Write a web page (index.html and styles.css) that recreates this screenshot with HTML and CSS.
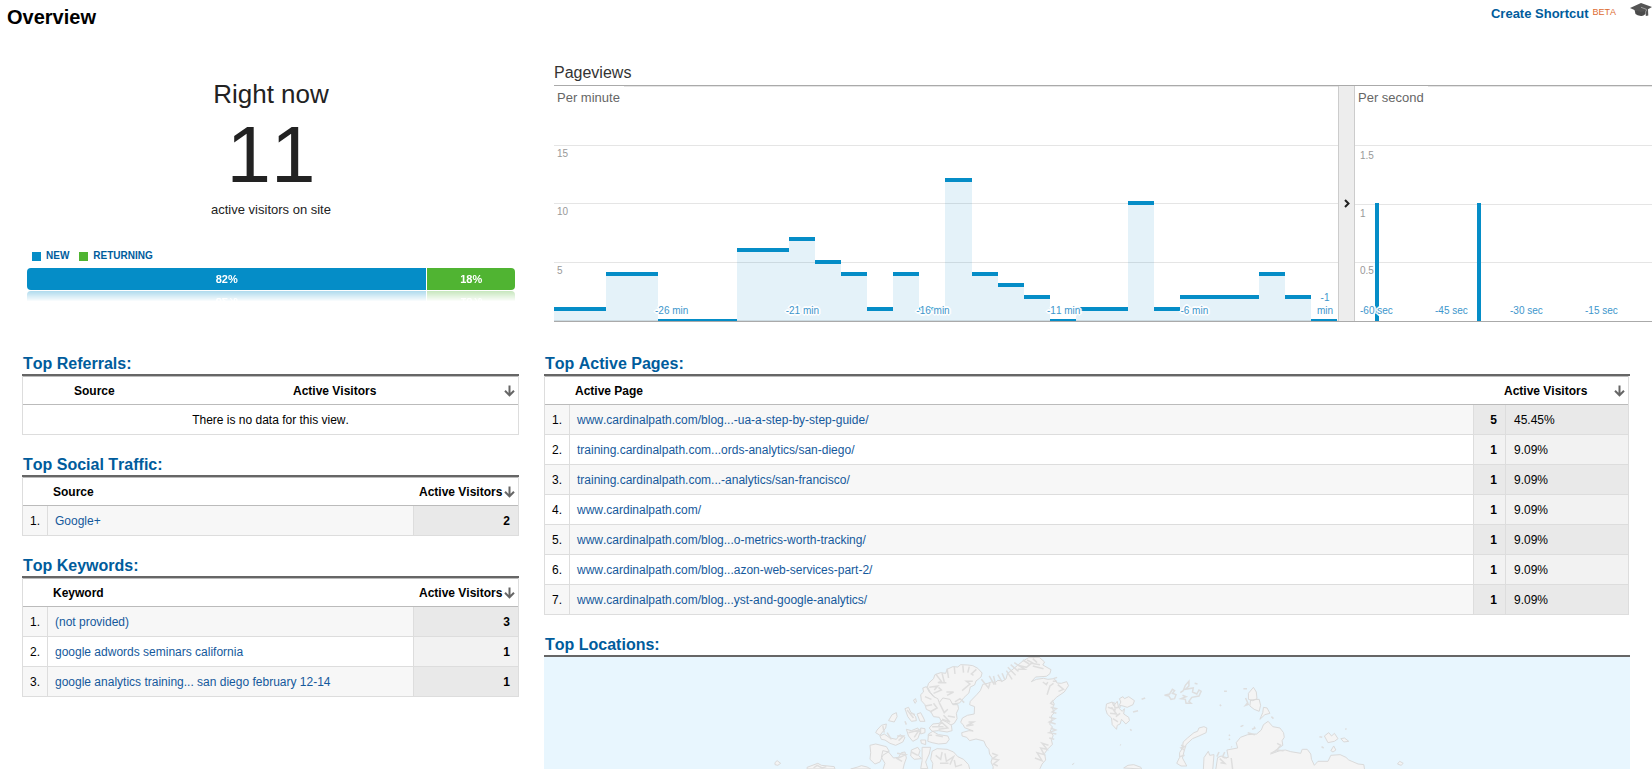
FILE: index.html
```html
<!DOCTYPE html>
<html lang="en">
<head>
<meta charset="utf-8">
<title>Overview</title>
<link rel="stylesheet" href="styles.css">
</head>
<body>
<svg class="defs" aria-hidden="true">
  <symbol id="arrow-down" viewBox="0 0 11 12"><path d="M5.5 0.5V10M1 5.8l4.5 4.5L10 5.8" fill="none" stroke="#666" stroke-width="2"/></symbol>
</svg>

<header class="topbar">
  <h1 class="title">Overview</h1>
  <nav class="tools">
    <a class="shortcut" href="#">Create Shortcut</a>
    <span class="beta">BETA</span>
    <button class="hat" type="button" aria-label="Education">
      <svg width="22" height="14" viewBox="0 0 22 14"><path d="M0 5L11 0l11 4-4 2.2.3 6.3-2.5.5-.3-5L11 10z" fill="#555"/><path d="M4.500 6.800L11 9l4.400-1.500v3.500Q13 13.500 11 13 7 12.500 5.500 11z" fill="#4a4a4a"/><path d="M11 4.300l5.300 2v2" fill="none" stroke="#bbb" stroke-width=".7"/></svg>
    </button>
  </nav>
</header>

<main class="grid">
  <section class="now">
    <h2 class="now-title">Right now</h2>
    <div class="count">11</div>
    <div class="caption">active visitors on site</div>
    <ul class="legend">
      <li><i class="swatch new"></i>NEW</li>
      <li><i class="swatch returning"></i>RETURNING</li>
    </ul>
    <div class="split">
      <div class="part new" style="flex-grow:82">82%</div>
      <div class="part returning" style="flex-grow:18">18%</div>
    </div>
  </section>

  <section class="views">
    <h2 class="views-title">Pageviews</h2>
    <div class="charts">
      <div class="plot minutes">
        <svg class="marks" viewBox="0 0 784 235" preserveAspectRatio="none" aria-hidden="true">
          <path class="gridline" d="M0 0h784v1H0zM0 59h784v1H0zM0 117h784v1H0zM0 176h784v1H0zM0 234h784v1H0z"/>
          <path class="area" d="M0 235V223H52V188H104V235ZM183 235V164H235V153H261V176H287V188H313V223H339V188H365V223H391V94H418V188H444V199H470V211H496V235ZM522 235V223H574V117H600V223H626V211H705V188H731V211H757V235Z"/>
          <path class="cap" d="M0 221h52v4H0zM52 186h52v4H52zM104 233h79v3H104zM183 162h52v4H183zM235 151h26v4H235zM261 174h26v4H261zM287 186h26v4H287zM313 221h26v4H313zM339 186h26v4H339zM365 221h26v4H365zM391 92h27v4H391zM418 186h26v4H418zM444 197h26v4H444zM470 209h26v4H470zM496 233h26v3H496zM522 221h52v4H522zM574 115h26v4H574zM600 221h26v4H600zM626 209h79v4H626zM705 186h26v4H705zM731 209h26v4H731zM757 233h26v3H757z"/>
        </svg>
        <div class="plot-title">Per minute</div>
        <div class="ylabels"><span>15</span><span>10</span><span>5</span></div>
        <div class="xlabels">
          <span>-26 min</span><span>-21 min</span><span>-16 min</span><span>-11 min</span><span>-6 min</span><span class="wrap">-1<br>min</span>
        </div>
      </div>
      <button class="divider" type="button" aria-label="Collapse per second chart">
        <svg width="6" height="9" viewBox="0 0 6 9"><path d="M1 1l3.500 3.500L1 8" fill="none" stroke="#222" stroke-width="2"/></svg>
      </button>
      <div class="plot seconds">
        <svg class="marks" viewBox="0 0 297 235" preserveAspectRatio="none" aria-hidden="true">
          <path class="gridline" d="M0 0h297v1H0zM0 59h297v1H0zM0 118h297v1H0zM0 176h297v1H0z"/>
          <path class="cap" d="M20 117h4v118h-4zM122 117h4v118h-4z"/>
        </svg>
        <div class="plot-title">Per second</div>
        <div class="ylabels"><span>1.5</span><span>1</span><span>0.5</span></div>
        <div class="xlabels">
          <span>-60 sec</span><span>-45 sec</span><span>-30 sec</span><span>-15 sec</span>
        </div>
      </div>
    </div>
  </section>

  <div class="column">
    <section>
      <h2 class="heading">Top Referrals:</h2>
      <table class="data referrals">
        <thead><tr><th class="h-source">Source</th><th><div class="sort">Active Visitors<svg class="arrow"><use href="#arrow-down"/></svg></div></th></tr></thead>
        <tbody><tr><td class="empty" colspan="2">There is no data for this view.</td></tr></tbody>
      </table>
    </section>
    <section>
      <h2 class="heading">Top Social Traffic:</h2>
      <table class="data small">
        <thead><tr><th class="num"></th><th>Source</th><th class="val"><div class="sort">Active Visitors<svg class="arrow"><use href="#arrow-down"/></svg></div></th></tr></thead>
        <tbody><tr><td class="num">1.</td><td><a href="#">Google+</a></td><td class="val">2</td></tr></tbody>
      </table>
    </section>
    <section>
      <h2 class="heading">Top Keywords:</h2>
      <table class="data small">
        <thead><tr><th class="num"></th><th>Keyword</th><th class="val"><div class="sort">Active Visitors<svg class="arrow"><use href="#arrow-down"/></svg></div></th></tr></thead>
        <tbody>
          <tr><td class="num">1.</td><td><a href="#">(not provided)</a></td><td class="val">3</td></tr>
          <tr><td class="num">2.</td><td><a href="#">google adwords seminars california</a></td><td class="val">1</td></tr>
          <tr><td class="num">3.</td><td><a href="#">google analytics training... san diego february 12-14</a></td><td class="val">1</td></tr>
        </tbody>
      </table>
    </section>
  </div>

  <div class="column">
    <section>
      <h2 class="heading">Top Active Pages:</h2>
      <table class="data pages">
        <colgroup><col class="c-num"><col><col class="c-count"><col class="c-pct"></colgroup>
        <thead><tr><th></th><th>Active Page</th><th class="h-visitors" colspan="2"><div class="sort">Active Visitors<svg class="arrow"><use href="#arrow-down"/></svg></div></th></tr></thead>
        <tbody>
          <tr><td class="num">1.</td><td><a href="#">www.cardinalpath.com/blog...-ua-a-step-by-step-guide/</a></td><td class="val">5</td><td class="pct">45.45%</td></tr>
          <tr><td class="num">2.</td><td><a href="#">training.cardinalpath.com...ords-analytics/san-diego/</a></td><td class="val">1</td><td class="pct">9.09%</td></tr>
          <tr><td class="num">3.</td><td><a href="#">training.cardinalpath.com...-analytics/san-francisco/</a></td><td class="val">1</td><td class="pct">9.09%</td></tr>
          <tr><td class="num">4.</td><td><a href="#">www.cardinalpath.com/</a></td><td class="val">1</td><td class="pct">9.09%</td></tr>
          <tr><td class="num">5.</td><td><a href="#">www.cardinalpath.com/blog...o-metrics-worth-tracking/</a></td><td class="val">1</td><td class="pct">9.09%</td></tr>
          <tr><td class="num">6.</td><td><a href="#">www.cardinalpath.com/blog...azon-web-services-part-2/</a></td><td class="val">1</td><td class="pct">9.09%</td></tr>
          <tr><td class="num">7.</td><td><a href="#">www.cardinalpath.com/blog...yst-and-google-analytics/</a></td><td class="val">1</td><td class="pct">9.09%</td></tr>
        </tbody>
      </table>
    </section>
    <section>
      <h2 class="heading">Top Locations:</h2>
      <svg class="map" viewBox="0 0 1086 112" role="img" aria-label="World map">
        <!-- Canada and Greenland -->
        <g transform="translate(-4 -27) scale(.3571 .3333)">
          <path class="land" d="M1350 95l18-12 30-1 15 14-5 9 23 14-3 12-10 8-30 2-12 14 14-7 20-3 12 3 18-2 8 13 12 1 15-5 5 12-12 19-22 16-10 12 4 8-5 12 5 14-8 10 2 14-7 10 8 9-6 12 8 14-5 12 3 14-12 13-10 14 3 20-10 12-6 14 0 8H1268l1-14-6-14 4-12-8-12-2-14-8-10-6-15-22-6-18 5-8-10-13-4-1-10 20-6 12 1-24-10-4-9-7-7 5-13 14-8 19-4 1-22-14-6 2-10 18-20 10-12 7-19 14-3 10-4 12 1 6-6 14 2 9-6 4-16z"/>
          <path class="land" d="M1088 160l14-14 4-12 16-6 14 2 4-12 16-8 14 1 8-7 20 1 14 2 14 8 12 14-3 12-14 12-4 12-12 6-4 18-14 14-12 16-20 3-4-6-24 7-14-6-10-18-10-12-8-16z"/>
          <path class="land" d="M1082 170l8 16 12 14 12 6 4 12 10-14 20 4 8 16 14 0 2 12-6 14 2 16-8 14-18 10-14-8-10-20-16-2-8-16-12-6-4-14-10-12-2-18 8-8-2-12z"/>
          <path class="land" d="M1100 282l18-2 8-10 12 6 14 10 2 16-14 4-24-4-18 2-8-10zM1088 312l12-8 16 10 26 4 4 10-8 12-22 2-18-4-12-4zM1098 364l14-8 28 2 18 8 12 14 16 8 14 16 4 16H1098l2-20-6-12zM1022 236l10-4 6 14 14 14 2 12-14 2-10-14zM1056 252l10-4 8 16 4 10-14 0zM986 254l12-6 2 12-8 16-16-4zM944 300l12-14 14-4-2 12-16 22-12-8zM952 318l12-6 16 12 18 4 10-14 14 8-6 14-20 10-16-6-14-10-10-2zM1026 298l14 4 18-8 6 14-6 18-14 8-12-16zM1066 294l12 2 0 12-12 4zM1066 330l14 0 0 14-12-4zM924 346l16-4 30 8 8 14-18 12-8 20-14 6-14-14 2-20zM960 362l16 4 14 18 14-2 8-14 10-2 4 18-6 18-4 18H960l6-20-10-18zM1040 360l18-8 6 10-4 14 8 10-20 2-10-10zM1070 352l24 0-4 20-10 24 6 20h-20l4-24zM748 412l30-12 10 6 36 4 2 7h-78zM1046 210l6-4 2 10-4 4zM658 398l6-6 10 8-8 6-8-2zM870 417l20-6 10-4 16 4 10 6zM1490 404l6-4"/>
          <path class="coast" d="M1108 132l16 22-10 4M1126 130l6 26M1140 116l4 28M1160 108l2 24M1184 106l2 22M1202 110l-4 18M1222 118l-14 14 6 4M1212 154l-18 0 10 8-22 20M1188 218l-12-12-14 10M1102 190l22-10-8-8M1090 172l24-4-10 12M1116 158l22 0M1140 196l18-10-20 0M1096 208l-18-8M1098 224l-20 4M1092 246l20-12-10-14M1118 218l14 30 10-10M1142 258l20 4M1126 268l22 8-18-20M1236 148l20 26 4-14M1258 138l14 26M1270 138l6 26M1282 134l12 22M1294 130l8 20M1306 122l16 26M1310 112l22 24M1318 104l22 20M1328 98l30 20-20 0M1352 90l18 12M1364 90l18 10M1380 86l12 12M1400 104l-24-4-14 12-24-6M1380 108l30 8M1408 156l10 8 4-8M1420 194l8-26 10-8M1450 164l16 14-14 6M1438 146l10-4M1436 154l12 0M1438 210l-8 10 10 6M1430 232l16 4-12 10 12 4M1426 262l16 4-16 10 18 6M1430 294l14 6-18 8 20 4M1426 324l14 4M1424 346l-18-6 14 18-18-4 10 20-20-6 14 24-20-8M1266 370l14 6-12 10 16 4-14 12 12 6M1200 276l14 0-20 12 20-4M1000 370l24 4-24 12 14 8M1108 376l14 12 4-22M1134 370l4 24 20-14-10 24M1120 400l24 0M1160 390l4 20 18-6M1040 366l18 10M1032 308l30-8-14 22M1000 318l18 0-14 14M960 288l4 20M972 308l12 20M1028 240l18 24M1022 274l4 10M1050 254l-12-6M1098 290l32 0M1116 288l8-12 18 18-26 4M1098 316l-12 0M1128 320l-20-4M766 414l10-8 14 8 12-4"/>
        </g>
        <!-- Svalbard and northern Russia -->
        <g transform="translate(546 -27) scale(.3584 .3333)">
          <path class="land" d="M46 222l16-6 4 12 10-14 4 20 10 10 6-8-2 16 14 10 2 10-10 10-12-14-4 14-8 4-2 12-12-14-2-20-12-12-4-14zM82 206l10-6 4 6 12-6 16 12-4 12-16 8-12-4-10-2 4-10zM442 190l14-18 8 14 2 20-12 6-12-4zM448 210l24-2 4 18-4 18-14-6-12-10zM484 232l10 2 8 16-14 4-14 14 8-20zM654 318l12-10 8 10 8-8 10 16-10 8-18 4zM700 326l10-2 12 10-14 2zM672 362l8-14 6 12-8 6zM318 290l8 4-2 14-20 10-18 8-18 18-6 22-4 18 12 24-16 0-12-8 8-18 0-14 8-14 2-18 12-12 18-16 10-4 4-10zM94 414l12-8 16-2 20 8 2 5zM858 402l6-8 10 6-6 6z"/>
          <path class="land" d="M316 425L318 383 330 364 334 376 346 374 342 425ZM350 425L356 383 366 378 374 384 386 382 382 360 412 354 408 338 420 322 440 314 465 312 478 300 484 284 497 274 510 290 530 294 540 308 542 322 536 332 538 346 522 358 504 372 530 362 545 360 560 365 588 370 592 358 606 358 616 372 618 388 626 406 636 394 664 394 672 376 698 374 714 382 722 390 748 402 764 404 767 425Z"/>
          <path class="coast" d="M208 196l14-4 8-14 6 4-6 8 10 4-4 12-10 2-6-10zM252 188l8-6 6-16 10-12 0 14-10 10 22-4-2 12 12 6 6-12 6 4-6 14-20 4-8 12 6 6-14 0-2-12-12-2 14-6-10-4M434 204l6 14-6 8 10-4M428 176l10 0M374 184l8 0M292 160l8 2M144 208l10-4M120 246l14-4M50 232l22 8M56 250l18 2-14-20M64 266l14 10M66 216l4 18 16-4M84 250l-12 10M362 224l4 4M420 290l8-4M452 298l10-4M458 290l2 4M112 298l4 4M84 344l2 2M388 314l2 4M388 326l2 4M394 350l2 2M506 260l6 6M712 298l4-2M646 350l6 4M640 320l8 2M504 370l16-8 12-16-10-6M518 360l22 2M362 386l14 14-12-2M376 366l-6 14 12 4M254 346l10 4-10 4 10 6M250 380l14-4M360 366l-6 14M440 308l20 6M394 384l4 34"/>
        </g>
      </svg>
    </section>
  </div>
</main>
</body>
</html>
```
FILE: styles.css
```css
* { box-sizing: border-box; }

body {
  margin: 0;
  background: #fff;
  color: #000;
  font: 12px/16px "Liberation Sans", Arial, sans-serif;
  font-kerning: none;
  overflow-x: hidden;
}

h1, h2, ul { margin: 0; padding: 0; }
button { border: 0; padding: 0; background: none; }
a { color: #15599c; text-decoration: none; }
.defs { position: absolute; width: 0; height: 0; }

/* Top bar */
.topbar {
  display: flex;
  justify-content: space-between;
  align-items: flex-start;
  padding: 5px 0 0 7px;
}
.title { font-size: 20px; line-height: 24px; }
.tools { display: flex; align-items: flex-start; }
.shortcut { color: #005c9c; font-size: 13px; font-weight: bold; line-height: 18px; }
.beta { margin: 0 14px 0 4px; color: #dd6b2f; font-size: 9px; line-height: 14px; }
.hat { display: flex; margin-top: -2px; }

/* Page grid */
.grid {
  display: grid;
  grid-template-columns: minmax(0, 497fr) minmax(0, 1086fr);
  gap: 32px 25px;
  padding: 33px 22px 0;
}
.column { display: flex; flex-direction: column; gap: 20px; }

/* Right now */
.now { padding: 17px 4px 0 5px; color: #222; text-align: center; }
.now-title { font-size: 26px; font-weight: normal; line-height: 30px; }
.count { font-size: 80px; line-height: 92px; }
.caption { font-size: 13px; line-height: 18px; }
.legend {
  display: flex;
  gap: 10px;
  margin: 30px 0 5px;
  padding-left: 5px;
  color: #005c9c;
  font-size: 10px;
  font-weight: bold;
  line-height: 14px;
  list-style: none;
}
.legend li { display: flex; align-items: center; gap: 5px; }
.swatch { width: 9px; height: 9px; }
.new { background: #058dc7; }
.returning { background: #50b432; }
.split {
  display: flex;
  gap: 1px;
  border-radius: 4px;
  overflow: hidden;
  -webkit-box-reflect: below 1px linear-gradient(transparent 52%, rgba(0, 0, 0, .32));
}
.part {
  flex: 1 1 0;
  color: #fff;
  font-size: 11px;
  font-weight: bold;
  line-height: 22px;
}

/* Pageviews */
.views { margin: 0 -22px 0 10px; }
.views-title {
  padding-bottom: 1px;
  color: #333;
  font-size: 16px;
  font-weight: normal;
  line-height: 22px;
}
.charts {
  display: flex;
  border-top: 1px solid #aaa;
  border-bottom: 1px solid #aaa;
}
.plot { position: relative; height: 235px; }
.minutes { flex: 784 1 0; }
.seconds { flex: 297 1 0; }
.marks { display: block; width: 100%; height: 100%; shape-rendering: crispEdges; }
.gridline { fill: #e5e5e5; }
.area { fill: #058dc7; fill-opacity: .11; }
.cap { fill: #058dc7; }
.plot-title {
  position: absolute;
  top: 0;
  left: 0;
  padding: 4px 4px 0 3px;
  background: #fff;
  color: #666;
  font-size: 13px;
}
.ylabels {
  position: absolute;
  inset: 60px auto 0 3px;
  display: grid;
  grid-template-rows: repeat(3, 1fr);
  color: #999;
  font-size: 10px;
}
.seconds .ylabels { inset: 62px auto 0 5px; }
.xlabels {
  position: absolute;
  inset: auto 0 4px;
  display: grid;
  align-items: end;
  color: #3d96cc;
  font-size: 10px;
  line-height: 13px;
  text-align: center;
  white-space: nowrap;
  text-shadow: -2px 0 #fff, 2px 0 #fff, 0 -2px #fff, 0 2px #fff, -1px -1px #fff, 1px -1px #fff, -1px 1px #fff, 1px 1px #fff;
}
.minutes .xlabels { grid-template-columns: repeat(6, 1fr); }
.minutes .xlabels span { justify-self: end; width: 26px; display: flex; justify-content: center; }
.minutes .xlabels .wrap { display: block; }
.seconds .xlabels { right: -3px; grid-template-columns: repeat(4, 1fr); }
.seconds .xlabels span { justify-self: start; margin-left: 5px; }
.divider {
  flex: 0 0 17px;
  display: flex;
  align-items: center;
  justify-content: center;
  border: solid #ccc;
  border-width: 0 1px;
  background: #ededed;
}

/* Data tables */
.heading {
  padding-left: 1px;
  border-bottom: 2px solid #666;
  color: #005c9c;
  font-size: 16px;
  line-height: 20px;
}
.data {
  width: 100%;
  border-spacing: 0;
  border: solid #ddd;
  border-width: 0 1px;
  table-layout: fixed;
}
.data th {
  height: 29px;
  padding: 0 0 0 5px;
  border-top: 1px solid #bbb;
  border-bottom: 1px solid #bbb;
  text-align: left;
}
.data td {
  height: 30px;
  padding: 0 7px;
  border-bottom: 1px solid #ddd;
  border-right: 1px solid #ddd;
}
.data td:last-child { border-right: 0; }
.data tbody tr:nth-child(odd) { background: #f7f7f7; }
.data tbody .val, .data .pct { background: #f2f2f2; }
.data tbody tr:nth-child(odd) .val,
.data tbody tr:nth-child(odd) .pct { background: #e9e9e9; }
.data .num { width: 25px; text-align: right; }
.data tbody .val { padding-right: 8px; font-weight: bold; text-align: right; }
.data .pct { padding-left: 8px; }
.small .val { width: 104px; }
.pages { width: calc(100% - 1px); }
.c-num { width: 25px; }
.c-count { width: 32px; }
.c-pct { width: 122px; }
.data .h-visitors { padding-left: 30px; }
.sort { display: flex; align-items: center; justify-content: space-between; padding-right: 3px; }
.arrow { flex: none; width: 11px; height: 12px; }
.referrals .h-source { width: 218px; padding-left: 51px; }
.referrals th + th { padding-left: 52px; }
.data .empty { background: #fff; text-align: center; }

.map { display: block; width: 100%; height: auto; background: #e8f6fe; }
.land { fill: #f4f4f4; stroke: #dadada; stroke-linejoin: round; vector-effect: non-scaling-stroke; }
.coast { fill: none; stroke: #dedede; stroke-width: 1.5; vector-effect: non-scaling-stroke; }
```
